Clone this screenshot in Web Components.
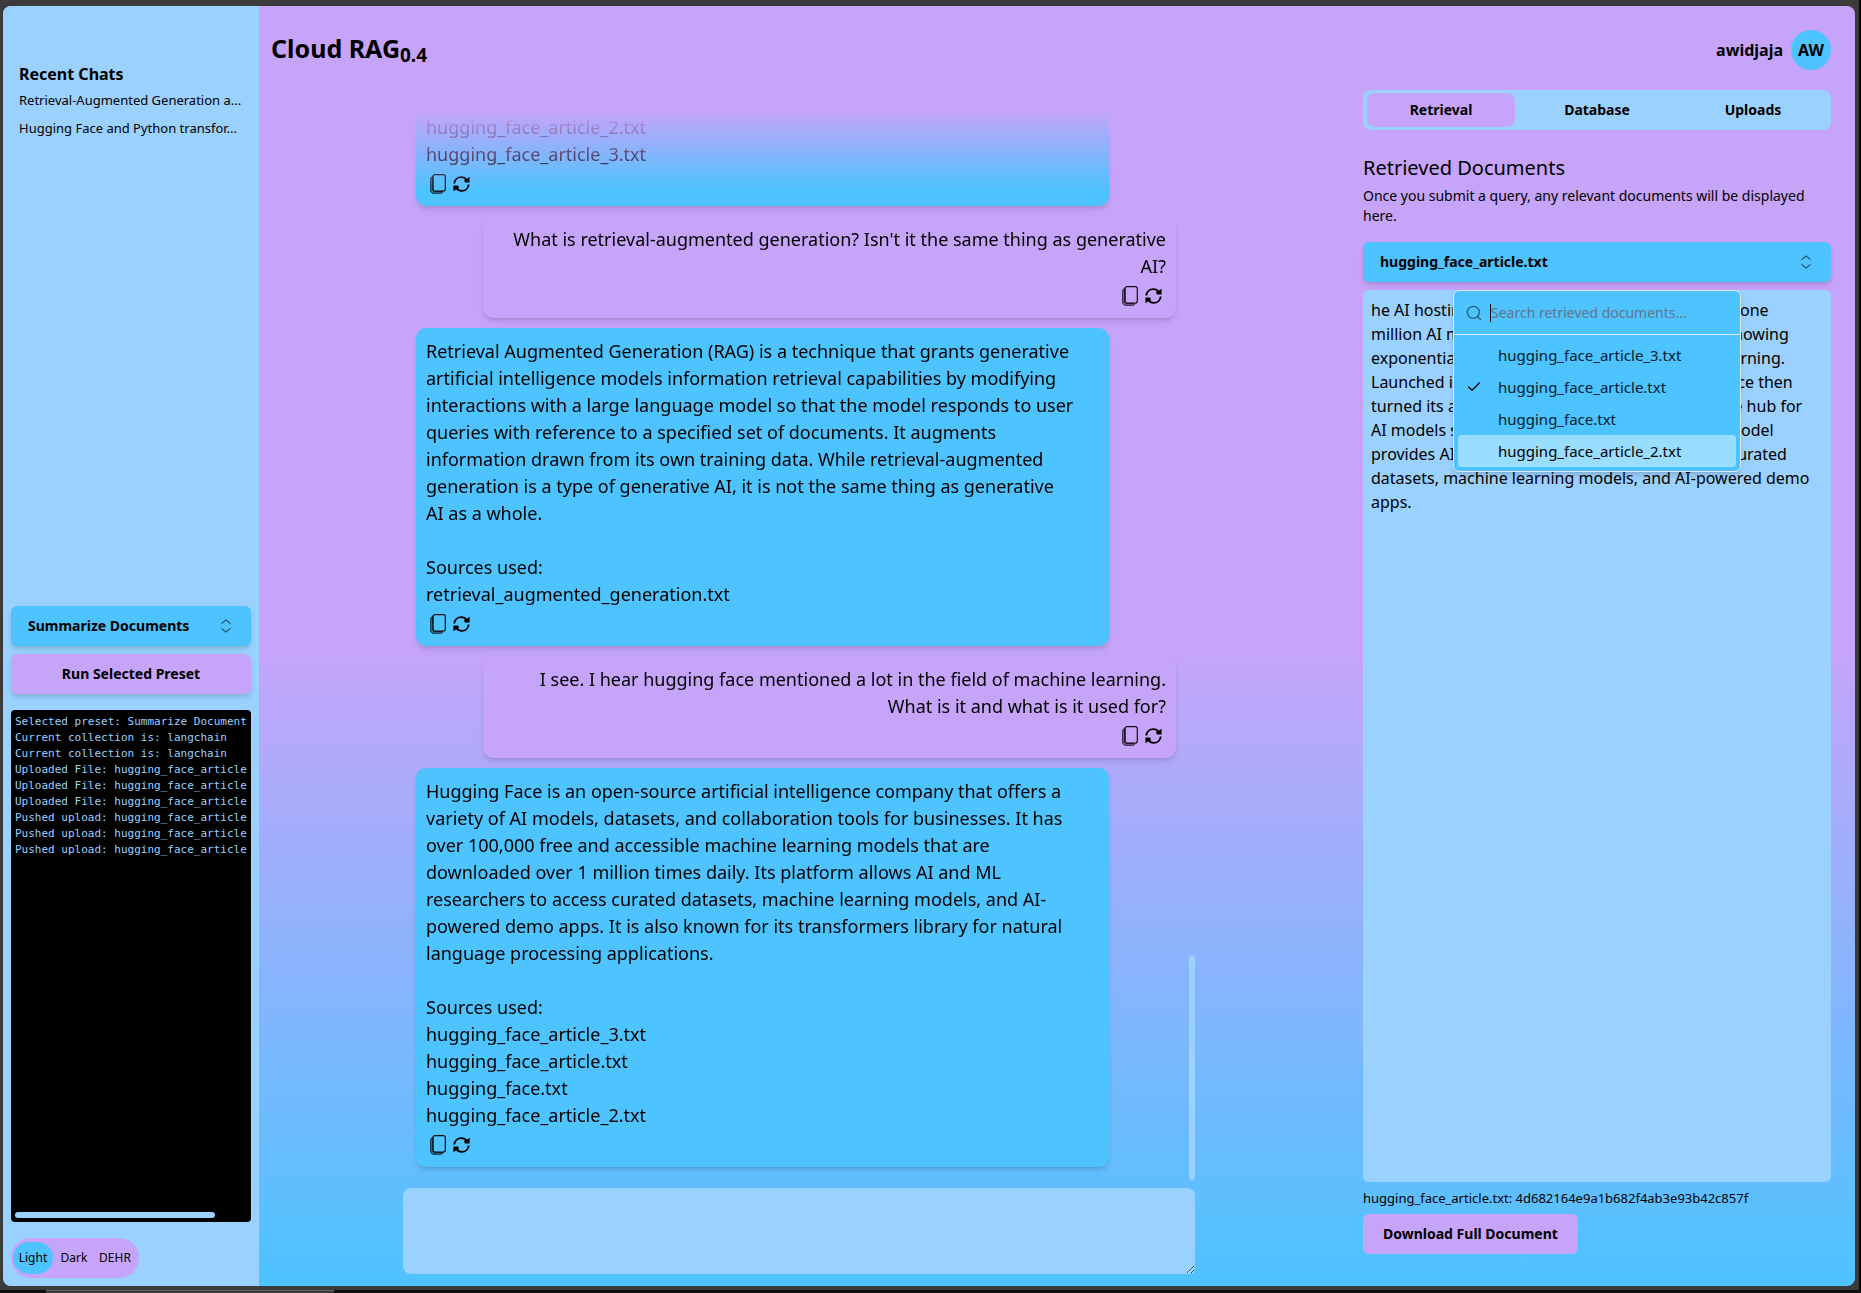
<!DOCTYPE html>
<html lang="en">
<head>
<meta charset="utf-8">
<title>Cloud RAG</title>
<style>
:root{
  --sky:#4dc3ff; --pale:#9ad1ff; --lilac:#c6a4fa; --frame:#3b3b3b;
  --shadow:0 4px 6px -1px rgba(0,0,0,.12),0 2px 4px -2px rgba(0,0,0,.12);
}
*{box-sizing:border-box}
body{margin:0;color:#000;background:var(--frame);font:14px/20px "Noto Sans",sans-serif}
</style>
</head>
<body>
<rag-app>
  <rag-sidebar slot="side">
    <chat-link slot="chats">Retrieval-Augmented Generation a...</chat-link>
    <chat-link slot="chats">Hugging Face and Python transfor...</chat-link>
    <log-terminal slot="log">Selected preset: Summarize Documents
Current collection is: langchain
Current collection is: langchain
Uploaded File: hugging_face_article
Uploaded File: hugging_face_article_2.txt
Uploaded File: hugging_face_article_3.txt
Pushed upload: hugging_face_article
Pushed upload: hugging_face_article_2.txt
Pushed upload: hugging_face_article_3.txt</log-terminal>
    <theme-switch slot="theme"></theme-switch>
  </rag-sidebar>
  <rag-chat slot="chat">
    <chat-message from="bot">hugging_face_article_2.txt
hugging_face_article_3.txt</chat-message>
    <chat-message from="user">What is retrieval-augmented generation? Isn't it the same thing as generative
AI?</chat-message>
    <chat-message from="bot">Retrieval Augmented Generation (RAG) is a technique that grants generative
artificial intelligence models information retrieval capabilities by modifying
interactions with a large language model so that the model responds to user
queries with reference to a specified set of documents. It augments
information drawn from its own training data. While retrieval-augmented
generation is a type of generative AI, it is not the same thing as generative
AI as a whole.

Sources used:
retrieval_augmented_generation.txt</chat-message>
    <chat-message from="user">I see. I hear hugging face mentioned a lot in the field of machine learning.
What is it and what is it used for?</chat-message>
    <chat-message from="bot">Hugging Face is an open-source artificial intelligence company that offers a
variety of AI models, datasets, and collaboration tools for businesses. It has
over 100,000 free and accessible machine learning models that are
downloaded over 1 million times daily. Its platform allows AI and ML
researchers to access curated datasets, machine learning models, and AI-
powered demo apps. It is also known for its transformers library for natural
language processing applications.

Sources used:
hugging_face_article_3.txt
hugging_face_article.txt
hugging_face.txt
hugging_face_article_2.txt</chat-message>
  </rag-chat>
  <rag-documents slot="docs">
    <doc-picker slot="picker" value="hugging_face_article.txt"></doc-picker>
    <span slot="text">he AI hosting platform Hugging Face has passed one
million AI model listings on its online platform, showing
exponential growth in the domain of machine learning.
Launched in 2016 as a chatbot team, Hugging Face then
turned its attention to becoming the open-source hub for
AI models since 2020. Hugging Face's business model
provides AI and ML researchers access to these curated
datasets, machine learning models, and AI-powered demo
apps.</span>
    <span slot="hash">hugging_face_article.txt: 4d682164e9a1b682f4ab3e93b42c857f</span>
  </rag-documents>
</rag-app>

<script>
const BASE = `*{box-sizing:border-box}
button,input,select,textarea{font:inherit;color:inherit;border:0;margin:0;padding:0;background:none}
h1,h2,p,pre{margin:0}`;
const CHEVRONS = `<svg class="chev" width="16" height="16" viewBox="0 0 24 24" fill="none" stroke="#000" stroke-width="2" stroke-linecap="round" stroke-linejoin="round" opacity=".5" aria-hidden="true"><path d="M6 8l6-5 6 5M6 16l6 5 6-5"/></svg>`;

function define(name, css, html, setup) {
  customElements.define(name, class extends HTMLElement {
    constructor() {
      super();
      const root = this.attachShadow({ mode: 'open' });
      root.innerHTML = `<style>${BASE}${css}</style>${html}`;
    }
    connectedCallback() { if (setup) setup(this, this.shadowRoot); }
  });
}

define('rag-app', `
:host{display:flex;flex-direction:column;height:100vh}
.window{flex:1;min-height:0;display:flex;padding:6px 4px 4px 3px;border-right:2px solid #080808}
.app{flex:1;min-width:0;display:grid;grid-template-columns:256px minmax(0,1fr) 516px;grid-template-rows:100%;
  border-radius:8px;overflow:hidden;background:linear-gradient(var(--lilac) 50%,var(--sky))}
.taskbar{height:3px;background:#101010;display:flex;padding-left:46px}
.taskbar i{width:288px;background:#3c3c3c;border-top:1px solid #666}
`, `<div class="window"><div class="app"><slot name="side"></slot><slot name="chat"></slot><slot name="docs"></slot></div></div>
<div class="taskbar"><i></i></div>`);

define('rag-sidebar', `
:host{display:flex;flex-direction:column;background:var(--pale);padding:8px;min-height:0}
nav{flex:1;padding:48px 8px 0;display:flex;flex-direction:column}
h2{font-size:16px;line-height:24px;font-weight:700}
.preset{position:relative;display:flex;margin-bottom:8px}
select{appearance:none;flex:1;height:40px;padding:0 17px;background:var(--sky);border-radius:6px;font-weight:700;box-shadow:var(--shadow)}
.chev{position:absolute;right:17px;top:12px;pointer-events:none}
.run{height:40px;background:var(--lilac);border-radius:6px;font-weight:700;box-shadow:var(--shadow);margin-bottom:16px}
`, `<nav aria-label="Recent chats"><h2>Recent Chats</h2><slot name="chats"></slot></nav>
<div class="preset"><select aria-label="Preset"><option>Summarize Documents</option></select>${CHEVRONS}</div>
<button class="run">Run Selected Preset</button>
<slot name="log"></slot><slot name="theme"></slot>`);

define('chat-link', `
:host{display:block;height:28px}
a{display:block;color:inherit;text-decoration:none;font-size:13px;line-height:28px;white-space:nowrap}
`, `<a href="#"><slot></slot></a>`);

define('log-terminal', `
:host{display:flex;flex-direction:column;flex:0 0 40.5%;background:#000;border-radius:4px;padding:4px;margin-bottom:16px}
pre{flex:1;overflow:hidden;color:var(--pale);font:11px/16px "DejaVu Sans Mono",monospace}
.bar{width:86%;height:6px;border-radius:3px;background:var(--pale)}
`, `<pre><slot></slot></pre><div class="bar"></div>`);

define('theme-switch', `
:host{display:flex}
fieldset{border:0;margin:0;padding:0 4px 0 2px;height:40px;width:128px;border-radius:20px;background:var(--lilac);display:flex;align-items:center;justify-content:space-between}
label{height:32px;line-height:32px;width:40px;text-align:center;border-radius:16px;font-size:12px;position:relative;white-space:nowrap}
label:has(:checked){background:var(--sky)}
input{position:absolute;inset:0;opacity:0;appearance:none}
`, `<fieldset aria-label="Theme">
<label><input type="radio" name="t" checked>Light</label><label><input type="radio" name="t">Dark</label><label><input type="radio" name="t">DEHR</label>
</fieldset>`);

define('rag-chat', `
:host{display:flex;flex-direction:column;min-width:0;min-height:0}
header{height:106px;flex:none;padding:22px 12px 0}
h1{font-size:25px;line-height:40px;font-weight:700}
sub{font-size:19px;line-height:0;vertical-align:-4px}
.column{flex:1;min-height:0;padding:0 144px 12px;display:flex;flex-direction:column;gap:8px}
.view{flex:1;min-height:0;display:flex;overflow:hidden;-webkit-mask:linear-gradient(transparent,#000 78px);mask:linear-gradient(transparent,#000 78px)}
.list{flex:1;display:flex;flex-direction:column;justify-content:flex-end;gap:10px;padding:0 13px 13px}
.rail{width:6px;display:flex;flex-direction:column;justify-content:flex-end}
.thumb{height:21%;border-radius:3px;background:var(--pale)}
textarea{height:86px;flex:none;border-radius:8px;background:var(--pale);padding:10px;font-size:18px;resize:vertical}
`, `<header><h1>Cloud RAG<sub>0.4</sub></h1></header>
<div class="column"><div class="view"><div class="list"><slot></slot></div><div class="rail"><div class="thumb"></div></div></div>
<textarea aria-label="Message"></textarea></div>`);

define('chat-message', `
:host{display:block;flex:none;padding:10px;border-radius:10px;background:var(--sky);margin-right:67px;box-shadow:var(--shadow)}
:host([from=user]){margin:0 0 0 67px;background:var(--lilac);text-align:right}
p{font-size:18px;line-height:27px;white-space:pre-line}
.tools{display:flex;gap:7px;height:28px;padding:6px 4px 0}
:host([from=user]) .tools{justify-content:flex-end}
button{height:20px;display:flex;align-items:center}
`, `<p><slot></slot></p><div class="tools">
<button aria-label="Copy"><svg width="16" height="20" viewBox="0 0 16 20"><path d="M3 2.6C1.300 2.800.7 3.500.7 5v11c0 2.200 1.100 3.300 3.300 3.300h6.500c1.500 0 2.200-.5 2.500-1.800H5c-1.400 0-2-.7-2-2z" fill="#000" fill-opacity=".4" stroke="#000" stroke-opacity=".75"/><rect x="3" y=".7" width="12.300" height="16.300" rx="2" fill="none" stroke="#111" stroke-width="1.200"/></svg></button>
<button aria-label="Retry"><svg width="17" height="16" viewBox="0 0 17 16"><path d="M1.300 7.500C1.700 3.700 4.600 1.100 8.200 1.100c2.400 0 4.300 1 5.400 2.800M15.700 8.500c-.4 3.800-3.300 6.400-6.900 6.400-2.400 0-4.300-1-5.400-2.800" fill="none" stroke="#000" stroke-width="1.900"/><path d="M16.600.8v5.600h-4.800l-.8-2.600 1.800-.2zM.4 15.200V9.600h4.800l.8 2.600-1.800.2z"/></svg></button>
</div>`);

define('rag-documents', `
:host{display:flex;flex-direction:column;min-height:0;padding:24px 24px 32px}
.user{display:flex;justify-content:flex-end;align-items:center;gap:8px;font-size:16px;font-weight:700;height:40px}
.avatar{width:40px;height:40px;border-radius:50%;background:var(--sky);line-height:40px;text-align:center}
.tabs{margin:20px 0 24px;height:40px;border-radius:8px;background:var(--pale);padding:3px 4px;display:grid;grid-template-columns:repeat(3,1fr);gap:8px;flex:none}
.tabs button{font-weight:700;border-radius:8px}
.tabs button[aria-selected=true]{background:var(--lilac)}
h2{font-size:20px;line-height:28px;font-weight:400}
.intro{margin:4px 0 16px}
.doc{flex:1;min-height:0;margin-top:8px;background:var(--pale);border-radius:6px;padding:8px;font-size:16px;line-height:24px;white-space:pre-line}
.hash{font-size:13px;line-height:16px;margin:8px 0}
.save{align-self:flex-start;height:40px;padding:0 20px;border-radius:6px;background:var(--lilac);font-weight:700;white-space:nowrap}
`, `<div class="user"><span>awidjaja</span><span class="avatar">AW</span></div>
<div class="tabs" role="tablist"><button role="tab" aria-selected="true">Retrieval</button><button role="tab" aria-selected="false">Database</button><button role="tab" aria-selected="false">Uploads</button></div>
<h2>Retrieved Documents</h2>
<p class="intro">Once you submit a query, any relevant documents will be displayed here.</p>
<slot name="picker"></slot>
<div class="doc"><slot name="text"></slot></div>
<p class="hash"><slot name="hash"></slot></p>
<button class="save">Download Full Document</button>`);

define('doc-picker', `
:host{display:block;position:relative;flex:none;z-index:1}
.open{width:100%;height:40px;padding:0 17px;display:flex;align-items:center;justify-content:space-between;background:var(--sky);border-radius:6px;font-weight:700;box-shadow:var(--shadow)}
.menu{position:absolute;top:calc(100% + 8px);left:50%;width:288px;margin-left:-144px;background:var(--sky);border:1px solid #e2e8f0;border-radius:6px;box-shadow:var(--shadow)}
.search{height:44px;padding:0 12px;display:flex;align-items:center;gap:8px;border-bottom:1px solid #e2e8f0}
.search input{flex:1;min-width:0;height:18px;outline:0;border-left:1px solid #000}
.search input::placeholder{color:#64748b;opacity:1}
ul{margin:0;padding:4px;list-style:none}
li{height:32px;display:flex;align-items:center;padding:0 8px 0 40px;border-radius:4px;position:relative;font-size:15px;color:#03202e}
li[aria-current=true]{background:#99ddff;color:#000}
li svg{position:absolute;left:8px}
`, `<button class="open" aria-haspopup="listbox" aria-expanded="true"><span></span>${CHEVRONS}</button>
<div class="menu"><div class="search"><svg width="16" height="16" viewBox="0 0 24 24" fill="none" stroke="#000" stroke-width="2" stroke-linecap="round" opacity=".5"><circle cx="11" cy="11" r="9"/><path d="M17.500 17.500L22 22"/></svg>
<input placeholder="Search retrieved documents..." aria-label="Search retrieved documents"></div>
<ul role="listbox">
<li role="option">hugging_face_article_3.txt</li>
<li role="option" aria-selected="true"><svg width="16" height="16" viewBox="0 0 24 24" fill="none" stroke="#000" stroke-width="2" stroke-linecap="round" stroke-linejoin="round"><path d="M20 6L9 17l-5-5"/></svg>hugging_face_article.txt</li>
<li role="option">hugging_face.txt</li>
<li role="option" aria-current="true">hugging_face_article_2.txt</li>
</ul></div>`, (host, root) => {
  root.querySelector('.open span').textContent = host.getAttribute('value');
});
</script>
</body>
</html>
